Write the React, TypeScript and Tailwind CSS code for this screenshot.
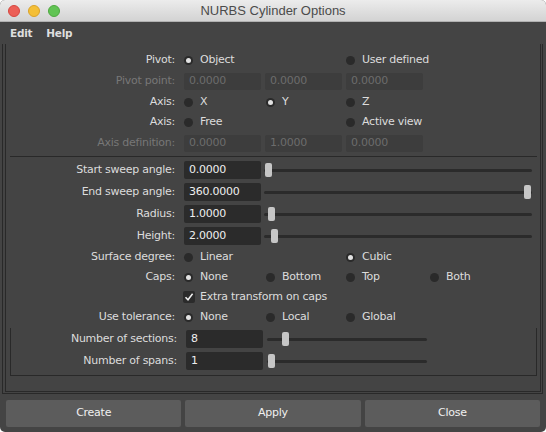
import React from 'react';

const ui = "font-['DejaVu_Sans',sans-serif]";

function Radio({ on, label, w }: { on?: boolean; label: string; w: string }) {
    return (
        <div className={`flex items-center gap-[7px] shrink-0 ${w}`}>
            <span className="flex items-center justify-center w-[9px] h-[9px] rounded-full bg-[#2a2a2a]">
                {on && <span className="w-[5px] h-[5px] rounded-full bg-[#e2e2e2]" />}
            </span>
            <span className="text-[#dcdcdc]">{label}</span>
        </div>
    );
}

function Field({ value, disabled, w = 'w-[77px]' }: { value: string; disabled?: boolean; w?: string }) {
    return disabled ? (
        <div className={`${w} h-[17px] rounded-[2px] bg-[#3d3d3d] pl-[5px] flex items-center text-[#6c6c6c]`}>{value}</div>
    ) : (
        <div className={`${w} h-[18px] rounded-[2px] bg-[#2b2b2b] pl-[5px] flex items-center text-[#eeeeee]`}>{value}</div>
    );
}

function Slider({ w, knob }: { w: string; knob: string }) {
    return (
        <div className={`relative h-[14px] flex items-center ${w}`}>
            <div className="w-full h-[3px] rounded-full bg-[#2b2b2b]" />
            <div className={`absolute top-0 w-[7px] h-[14px] rounded-[2px] bg-[#c6c6c6] ${knob}`} />
        </div>
    );
}

function Row({ label, h, dim, children, lw = 'w-[178px]' }: { label: string; h: string; dim?: boolean; children?: React.ReactNode; lw?: string }) {
    return (
        <div className={`flex items-center ${h}`}>
            <div className={`${lw} shrink-0 text-right pr-[9px] ${dim ? 'text-[#777777]' : 'text-[#dcdcdc]'}`}>{label}</div>
            <div className="flex items-center">{children}</div>
        </div>
    );
}

export default function App() {
    return (
        <div className={`w-[546px] h-[432px] bg-white ${ui} text-[11px] tracking-[-0.25px]`}>
            <div className="w-full h-full flex flex-col rounded-[5px] overflow-hidden bg-[#444444]">
                {/* title bar */}
                <div className="relative h-[22px] shrink-0 flex items-center justify-center bg-gradient-to-b from-[#ececec] to-[#d3d3d3] border-b border-[#b1b1b1]">
                    <div className="absolute left-[8px] top-[5px] flex gap-[8px]">
                        <span className="w-[12px] h-[12px] rounded-full bg-[#ec5f57] border border-[#d5473f]" />
                        <span className="w-[12px] h-[12px] rounded-full bg-[#f4bf37] border border-[#d9a229]" />
                        <span className="w-[12px] h-[12px] rounded-full bg-[#61c454] border border-[#4ea83f]" />
                    </div>
                    <span className="font-['Liberation_Sans',sans-serif] text-[13px] tracking-normal text-[#4b4b4b]">NURBS Cylinder Options</span>
                </div>

                {/* menu */}
                <div className="h-[22px] shrink-0 flex items-center gap-[14px] px-[10px] pt-[1px] font-bold text-[#dedede] text-[10.5px]">
                    <span>Edit</span>
                    <span>Help</span>
                </div>

                {/* frames */}
                <div className="ml-[2px] mr-[3px] h-[350px] border-x border-b border-[#292929]">
                    <div className="ml-[2px] mr-[1px] h-[348px] border-x border-b border-[#292929] pt-[6px]">
                        <Row label="Pivot:" h="h-[21px]">
                            <Radio on label="Object" w="w-[162px]" />
                            <Radio label="User defined" w="w-[100px]" />
                        </Row>
                        <Row label="Pivot point:" h="h-[21px]" dim>
                            <div className="flex gap-[4px]">
                                <Field value="0.0000" disabled />
                                <Field value="0.0000" disabled />
                                <Field value="0.0000" disabled />
                            </div>
                        </Row>
                        <Row label="Axis:" h="h-[20px]">
                            <Radio label="X" w="w-[82px]" />
                            <Radio on label="Y" w="w-[80px]" />
                            <Radio label="Z" w="w-[84px]" />
                        </Row>
                        <Row label="Axis:" h="h-[21px]">
                            <Radio label="Free" w="w-[162px]" />
                            <Radio label="Active view" w="w-[100px]" />
                        </Row>
                        <Row label="Axis definition:" h="h-[21px]" dim>
                            <div className="flex gap-[4px]">
                                <Field value="0.0000" disabled />
                                <Field value="1.0000" disabled />
                                <Field value="0.0000" disabled />
                            </div>
                        </Row>

                        <div className="mt-[2px] ml-[4px] mr-[3px] h-px bg-[#292929]" />

                        <div className="mt-[2px]">
                            <Row label="Start sweep angle:" h="h-[22px]">
                                <Field value="0.0000" />
                                <div className="ml-[3px]"><Slider w="w-[268px]" knob="left-[1px]" /></div>
                            </Row>
                            <Row label="End sweep angle:" h="h-[22px]">
                                <Field value="360.0000" />
                                <div className="ml-[3px]"><Slider w="w-[268px]" knob="right-[1px]" /></div>
                            </Row>
                            <Row label="Radius:" h="h-[22px]">
                                <Field value="1.0000" />
                                <div className="ml-[3px]"><Slider w="w-[268px]" knob="left-[4px]" /></div>
                            </Row>
                            <Row label="Height:" h="h-[22px]">
                                <Field value="2.0000" />
                                <div className="ml-[3px]"><Slider w="w-[268px]" knob="left-[7px]" /></div>
                            </Row>
                            <Row label="Surface degree:" h="h-[20px]">
                                <Radio label="Linear" w="w-[162px]" />
                                <Radio on label="Cubic" w="w-[100px]" />
                            </Row>
                            <Row label="Caps:" h="h-[20px]">
                                <Radio on label="None" w="w-[82px]" />
                                <Radio label="Bottom" w="w-[80px]" />
                                <Radio label="Top" w="w-[84px]" />
                                <Radio label="Both" w="w-[60px]" />
                            </Row>
                            <Row label="" h="h-[20px]">
                                <div className="flex items-center gap-[5px] -ml-[1px]">
                                    <span className="w-[12px] h-[12px] rounded-[2px] bg-[#2b2b2b] flex items-center justify-center">
                                        <svg width="10" height="10" viewBox="0 0 10 10">
                                            <path d="M1.5 5.2 L4 7.8 L8.6 1.8" fill="none" stroke="#f0f0f0" strokeWidth="1.5" />
                                        </svg>
                                    </span>
                                    <span className="text-[#dcdcdc]">Extra transform on caps</span>
                                </div>
                            </Row>
                            <Row label="Use tolerance:" h="h-[20px]">
                                <Radio on label="None" w="w-[82px]" />
                                <Radio label="Local" w="w-[80px]" />
                                <Radio label="Global" w="w-[84px]" />
                            </Row>
                        </div>

                        {/* tolerance section */}
                        <div className="mt-[1px] ml-[4px] w-[527px] border-x border-b border-[#292929] pb-[3px]">
                            <Row label="Number of sections:" h="h-[22px]" lw="w-[175px]">
                                <Field value="8" />
                                <div className="ml-[4px]"><Slider w="w-[160px]" knob="left-[15px]" /></div>
                            </Row>
                            <Row label="Number of spans:" h="h-[22px]" lw="w-[175px]">
                                <Field value="1" />
                                <div className="ml-[4px]"><Slider w="w-[160px]" knob="left-[1px]" /></div>
                            </Row>
                        </div>
                    </div>
                </div>

                {/* buttons */}
                <div className="flex gap-[4px] px-[6px] pt-[6px]">
                    <button className="flex-1 h-[27px] rounded-[2px] bg-[#5c5c5c] text-[#f0f0f0]">Create</button>
                    <button className="flex-1 h-[27px] rounded-[2px] bg-[#5c5c5c] text-[#f0f0f0]">Apply</button>
                    <button className="flex-1 h-[27px] rounded-[2px] bg-[#5c5c5c] text-[#f0f0f0]">Close</button>
                </div>
            </div>
        </div>
    );
}
